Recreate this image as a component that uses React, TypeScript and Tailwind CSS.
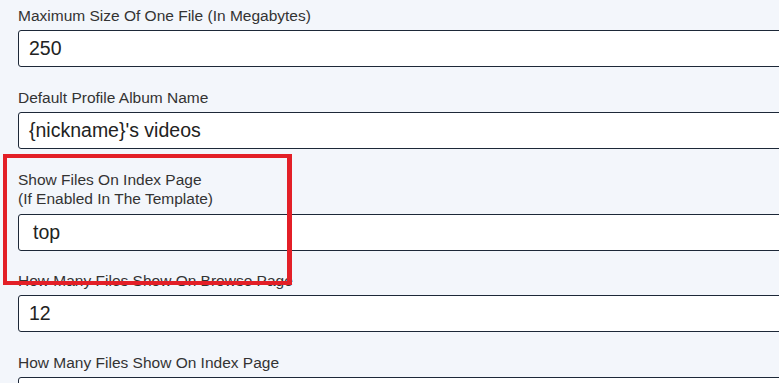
import React from "react";

const fields = [
  { label: ["Maximum Size Of One File (In Megabytes)"], value: "250" },
  { label: ["Default Profile Album Name"], value: "{nickname}'s videos" },
  {
    label: ["Show Files On Index Page", "(If Enabled In The Template)"],
    value: "top",
    select: true,
  },
  { label: ["How Many Files Show On Browse Page"], value: "12" },
  { label: ["How Many Files Show On Index Page"], value: "" },
];

const App = () => {
  return (
    <div className="relative h-[383px] w-[779px] overflow-hidden bg-[#f3f6fb] font-['Liberation_Sans',Arial,sans-serif]">
      <div className="flex flex-col pl-[18px] pt-[6px]">
        {fields.map((f, i) => (
          <div
            key={i}
            className={`flex flex-col ${f.select ? "mb-[20px]" : "mb-[21px]"}`}
          >
            <div className="text-[15.5px] leading-[19px] text-[#333]">
              {f.label.map((l) => (
                <div key={l}>{l}</div>
              ))}
            </div>
            <div
              className={`flex h-[37px] w-[820px] items-center rounded-[3px] border border-[#1d2838] bg-white text-[19.5px] text-[#222] ${
                f.select ? "mt-[6px] pl-[14px]" : "mt-[5px] pl-[10px]"
              }`}
            >
              {f.value}
            </div>
          </div>
        ))}
      </div>
      {/* highlight annotation */}
      <div className="pointer-events-none absolute left-[3px] top-[154px] h-[131px] w-[289px] border-[4px] border-r-[5px] border-[#e31f27]" />
    </div>
  );
};

export default App;
